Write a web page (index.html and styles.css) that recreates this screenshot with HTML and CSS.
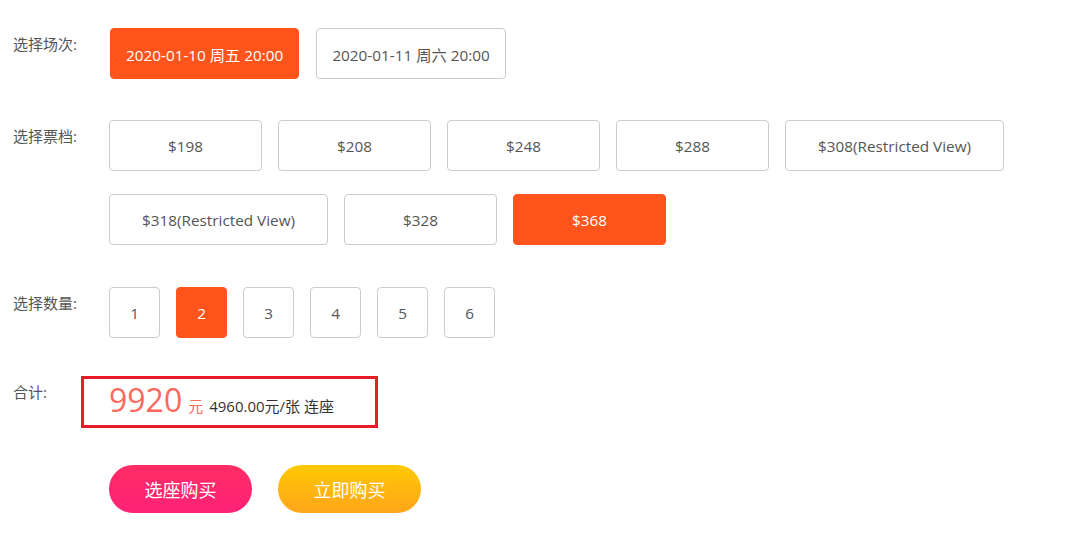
FILE: index.html
```html
<!DOCTYPE html>
<html lang="zh">
<head>
<meta charset="utf-8">
<title>选择场次</title>
<link rel="stylesheet" href="styles.css">
</head>
<body>
<div class="page">
  <div class="row row-session">
    <div class="label">选择场次:</div>
    <div class="options">
      <span class="opt opt-date active">2020-01-10 周五 20:00</span>
      <span class="opt opt-date">2020-01-11 周六 20:00</span>
    </div>
  </div>
  <div class="row row-price">
    <div class="label">选择票档:</div>
    <div class="options wrap">
      <span class="opt opt-price">$198</span>
      <span class="opt opt-price">$208</span>
      <span class="opt opt-price">$248</span>
      <span class="opt opt-price">$288</span>
      <span class="opt opt-price">$308(Restricted View)</span>
      <span class="opt opt-price">$318(Restricted View)</span>
      <span class="opt opt-price">$328</span>
      <span class="opt opt-price active">$368</span>
    </div>
  </div>
  <div class="row row-qty">
    <div class="label">选择数量:</div>
    <div class="options">
      <span class="opt opt-qty">1</span>
      <span class="opt opt-qty active">2</span>
      <span class="opt opt-qty">3</span>
      <span class="opt opt-qty">4</span>
      <span class="opt opt-qty">5</span>
      <span class="opt opt-qty">6</span>
    </div>
  </div>
  <div class="row row-total">
    <div class="label">合计:</div>
    <div class="total">
      <span class="amount">9920</span>
      <span class="unit">元</span>
      <span class="detail">4960.00元/张 连座</span>
    </div>
  </div>
  <div class="row row-actions">
    <div class="label"></div>
    <div class="actions">
      <span class="btn btn-seat">选座购买</span>
      <span class="btn btn-buy">立即购买</span>
    </div>
  </div>
</div>
</body>
</html>
```
FILE: styles.css
```css
*, *::before, *::after { box-sizing: border-box; }
html, body { margin: 0; padding: 0; background: #fff; }
body {
  font-family: "Open Sans", "Noto Sans CJK SC", sans-serif;
  color: #555;
}
.page {
  padding: 28px 0 0 13px;
}
.row {
  display: flex;
  align-items: flex-start;
}
.label {
  width: 96px;
  flex: none;
  font-size: 15px;
  line-height: 20px;
  padding-top: 6px;
  color: #555;
}
.options {
  display: flex;
  gap: 16px;
}
.options.wrap {
  flex-wrap: wrap;
  width: 900px;
  row-gap: 23px;
}
.opt {
  display: flex;
  align-items: center;
  justify-content: center;
  height: 51px;
  border: 1px solid #ccc;
  border-radius: 4px;
  font-size: 15.3px;
  color: #555;
  background: #fff;
  white-space: nowrap;
}
.opt.active {
  background: #ff541b;
  border-color: #ff541b;
  color: #fff;
}
.opt-date { padding: 0 15px; }
.opt-date:first-child { margin-left: 1px; }
.opt-date + .opt-date { margin-left: 1px; }
.opt-price { min-width: 153px; padding: 0 32px; }
.opt-qty { width: 51px; }
.row-session { margin-bottom: 41px; }
.row-price { margin-bottom: 42px; }
.row-qty { margin-bottom: 38px; }
.row-total { margin-bottom: 37px; }
.total {
  position: relative;
  display: flex;
  align-items: baseline;
  height: 52px;
  padding-top: 2px;
  white-space: nowrap;
}
.total::before {
  content: "";
  position: absolute;
  left: -28px;
  top: 0;
  width: 297px;
  height: 52px;
  border: 3px solid #e81c27;
}
.amount {
  font-size: 32px;
  line-height: 44px;
  color: #fc6a5e;
}
.unit {
  font-size: 15px;
  color: #fc6a5e;
  margin-left: 6px;
}
.detail {
  font-size: 15px;
  color: #333;
  margin-left: 6px;
}
.actions {
  display: flex;
  gap: 26px;
}
.btn {
  display: flex;
  align-items: center;
  justify-content: center;
  width: 143px;
  height: 48px;
  border-radius: 24px;
  color: #fff;
  font-size: 18px;
}
.btn-seat { background: linear-gradient(180deg, #ff2c64 0%, #ff2278 100%); }
.btn-buy { background: linear-gradient(180deg, #ffc903 0%, #ffa51b 100%); }
```
